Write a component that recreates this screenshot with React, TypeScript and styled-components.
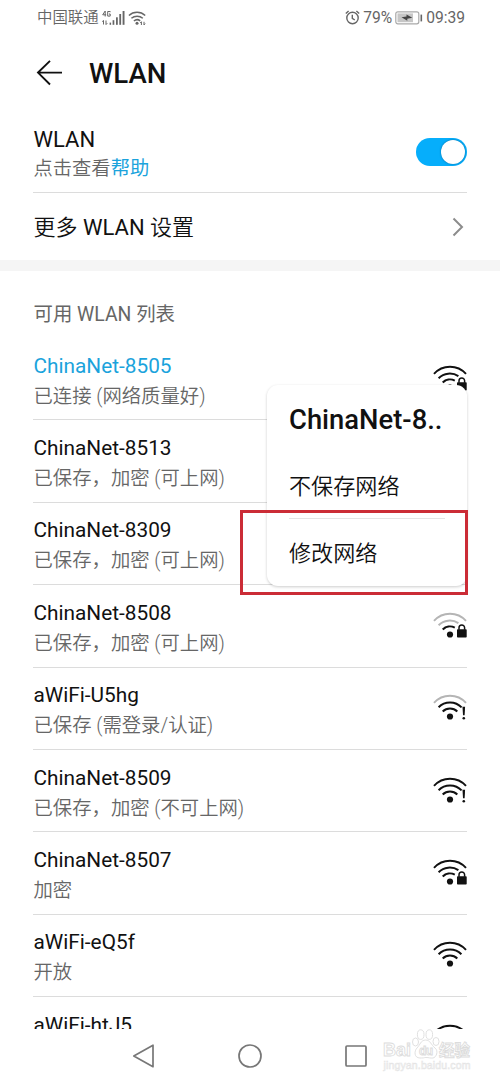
import React from 'react';
import styled, { createGlobalStyle } from 'styled-components';

const GlobalStyle = createGlobalStyle`
  * { box-sizing: border-box; }
  body {
    margin: 0;
    background: #fff;
    font-family: Roboto, "Noto Sans CJK SC", sans-serif;
    color: #111;
  }
`;

const Screen = styled.div`
  position: relative;
  width: 500px;
  height: 1083px;
  display: flex;
  flex-direction: column;
  overflow: hidden;
  background: #fff;
`;

const StatusBar = styled.div`
  height: 34px;
  flex: none;
  padding: 1px 35px 0 37px;
  display: flex;
  align-items: center;
  justify-content: space-between;
  color: #666;
  font-size: 15.3px;
  font-weight: 350;
  line-height: 20px;
`;

const StatusGroup = styled.div`
  display: flex;
  align-items: center;
  gap: 3px;
`;

const Carrier = styled.span`
  font-size: 15.4px;
`;

const Clock = styled.span`
  font-size: 15.6px;
  font-weight: 400;
`;

const Header = styled.header`
  height: 78px;
  flex: none;
  display: flex;
  align-items: center;
  gap: 26px;
  padding-left: 36px;
`;

const PageTitle = styled.h1`
  margin: 0;
  padding-top: 2px;
  font-size: 27.6px;
  font-weight: 500;
  line-height: 36px;
`;

const SettingRow = styled.div<{ $height: number; $line?: boolean }>`
  height: ${p => p.$height}px;
  flex: none;
  margin: 0 33px;
  display: flex;
  align-items: center;
  justify-content: space-between;
  border-bottom: ${p => (p.$line ? '1px solid #dcdcdc' : 'none')};
`;

const TextColumn = styled.div<{ $top: number }>`
  display: flex;
  flex-direction: column;
  padding: ${p => p.$top}px 0 0 0.5px;
`;

const SettingLabel = styled.div`
  font-size: 22px;
  line-height: 30px;
`;

const LightText = styled.span`
  font-weight: 350;
`;

const Hint = styled.div`
  font-size: 19.3px;
  font-weight: 350;
  line-height: 28px;
  color: #666;
`;

const Link = styled.span`
  color: #1ba3dc;
  font-weight: 400;
`;

const Toggle = styled.div`
  width: 51px;
  height: 28px;
  padding: 2px;
  border-radius: 14px;
  background: #06aefb;
  display: flex;
  justify-content: flex-end;
`;

const Knob = styled.div`
  width: 24px;
  height: 24px;
  border-radius: 50%;
  background: #fff;
  box-shadow: 0 0 2px rgba(0, 50, 90, 0.6);
`;

const Band = styled.div`
  height: 11px;
  flex: none;
  background: #f5f5f5;
`;

const SectionTitle = styled.div`
  height: 67px;
  flex: none;
  padding: 30px 0 0 33.5px;
  font-size: 19.4px;
  line-height: 28px;
  color: #666;
`;

const NetworkList = styled.div`
  flex: 1;
  min-height: 0;
  overflow: hidden;
  padding: 0 33px;
`;

const NetworkRow = styled.div`
  height: 82.4px;
  display: flex;
  align-items: center;
  justify-content: space-between;
  border-bottom: 1px solid #dcdcdc;
`;

const NetworkText = styled.div`
  padding: 5px 0 0 0.5px;
`;

const NetworkName = styled.div<{ $active?: boolean }>`
  font-size: 20.8px;
  line-height: 30px;
  color: ${p => (p.$active ? '#1ba3dc' : '#111')};
`;

const NetworkState = styled.div`
  font-size: 19.35px;
  line-height: 31px;
  font-weight: 350;
  color: #666;
`;

const NavBar = styled.nav`
  height: 54px;
  flex: none;
  display: flex;
  justify-content: center;
  align-items: center;
  gap: 80px;
`;

const Menu = styled.div`
  position: absolute;
  left: 267px;
  top: 385px;
  width: 199.5px;
  height: 201px;
  padding: 17px 22px 0;
  border-radius: 11px;
  background: #fff;
  box-shadow: 0 1px 3px rgba(0, 0, 0, 0.2);
`;

const MenuTitle = styled.div`
  font-size: 27.4px;
  font-weight: 500;
  line-height: 36px;
  white-space: nowrap;
`;

const MenuItem = styled.div<{ $line?: boolean }>`
  height: 67px;
  font-size: 22.1px;
  font-weight: 350;
  line-height: 68px;
  white-space: nowrap;
  border-bottom: ${p => (p.$line ? '1px solid #e4e4e4' : 'none')};
`;

const MenuItems = styled.div`
  padding-top: 14px;
`;

const Highlight = styled.div`
  position: absolute;
  left: 240px;
  top: 510px;
  width: 228px;
  height: 85px;
  border: 3px solid #cb2c36;
`;

const Watermark = styled.div`
  position: absolute;
  left: 382px;
  top: 1028px;
  width: 92px;
  height: 46px;
`;

const fade = '#b5b5b5';
const ink = '#111';

type Badge = 'lock' | 'alert' | 'none';

const middleArc: Record<Badge, string> = {
  lock: 'M5.6 13.9A16 16 0 0 1 25.4 11.8',
  alert: 'M5.6 13.9A16 16 0 0 1 28.6 14.1',
  none: 'M5.6 13.9A16 16 0 0 1 28.4 13.9',
};

function WifiIcon({ level, badge }: { level: number; badge: Badge }) {
  const stroke = (n: number) => (level >= n ? ink : fade);
  return (
    <svg width="34" height="28" viewBox="0 0.7 34 28" fill="none" strokeWidth="2">
      <path d="M1 9.6A21.5 21.5 0 0 1 33 9.6" stroke={stroke(3)} />
      <path d={middleArc[badge]} stroke={stroke(2)} />
      <path d={badge === 'lock' ? 'M9.7 18.2A10.4 10.4 0 0 1 21.8 16.3' : 'M9.7 18.2A10.4 10.4 0 0 1 24.3 18.2'} stroke={stroke(1)} />
      <circle cx="17" cy="23.2" r="3.1" fill={ink} />
      {badge === 'lock' && (
        <>
          <rect x="24" y="17.9" width="9.7" height="8.4" rx="0.8" fill={ink} />
          <path d="M26 18.4v-2a2.8 2.8 0 0 1 5.6 0v2" stroke={ink} strokeWidth="1.5" />
        </>
      )}
      {badge === 'alert' && (
        <>
          <path d="M29.5 13.4h2.6l-.5 8.6h-1.6z" fill={ink} />
          <circle cx="30.8" cy="24.9" r="1.3" fill={ink} />
        </>
      )}
    </svg>
  );
}

function SignalIcon() {
  return (
    <svg width="23" height="16" viewBox="0 0 23 16">
      <g stroke="#666" fill="none" strokeWidth="1">
        <path d="M3.2 6.5V1L.7 4.8h3.5" />
        <path d="M8.2 2.2V1.5H5.7v4.6h2.5V4H7" />
        <path d="M1.5 14.5v-4M.3 11.7l1.2-1.4M4 10.5v4M5.3 13.2 4 14.6" />
      </g>
      <g fill="#666">
        <rect x="7.6" y="12.6" width="1.5" height="2.2" />
        <rect x="10.6" y="10.2" width="1.7" height="4.6" />
        <rect x="14" y="7.3" width="1.8" height="7.5" />
        <rect x="17.3" y="4" width="1.8" height="10.8" />
        <rect x="20.6" y="1" width="1.9" height="13.8" />
      </g>
    </svg>
  );
}

function StatusWifi() {
  return (
    <svg width="19" height="16" viewBox="0 0 19 16" fill="none" stroke="#666" strokeWidth="1.5">
      <path d="M.9 5.5A12 12 0 0 1 17.2 5.5" />
      <path d="M3.4 8.3A8.6 8.6 0 0 1 14.8 8.3" />
      <path d="M5.9 11A5 5 0 0 1 12.2 10.8" />
      <circle cx="9" cy="13.3" r="1.5" fill="#666" stroke="none" />
      <path d="M13.4 11.8v3.2M12.2 13l1.2-1.3M16 11.8v3.2M17.2 13.6 16 14.9" strokeWidth="1" />
    </svg>
  );
}

function AlarmIcon() {
  return (
    <svg width="15" height="15" viewBox="0 0 15 15" fill="none" stroke="#666" strokeWidth="1.4">
      <circle cx="7.5" cy="8" r="5.7" />
      <path d="M7.3 4.8V8.3L9.8 10M.8 3.5 3.6 1M14.2 3.5 11.4 1" />
    </svg>
  );
}

function BatteryIcon() {
  return (
    <svg width="28" height="14" viewBox="0 0 28 14">
      <rect x=".8" y=".8" width="23" height="12" rx="2" fill="#fff" stroke="#a9a9a9" strokeWidth="1.2" />
      <rect x="2.5" y="2.4" width="15.5" height="8.8" fill="#c6c6c6" />
      <path d="M6.5 6.3 11.5 5.5V3.6L17.3 6.7 12.3 7.7v2z" fill="#444" />
      <rect x="25.5" y="3.6" width="1.6" height="6.8" fill="#666" />
    </svg>
  );
}

const networks: { name: string; state: string; level: number; badge: Badge; active?: boolean }[] = [
  { name: 'ChinaNet-8505', state: '已连接 (网络质量好)', level: 3, badge: 'lock', active: true },
  { name: 'ChinaNet-8513', state: '已保存，加密 (可上网)', level: 3, badge: 'lock' },
  { name: 'ChinaNet-8309', state: '已保存，加密 (可上网)', level: 3, badge: 'lock' },
  { name: 'ChinaNet-8508', state: '已保存，加密 (可上网)', level: 1, badge: 'lock' },
  { name: 'aWiFi-U5hg', state: '已保存 (需登录/认证)', level: 2, badge: 'alert' },
  { name: 'ChinaNet-8509', state: '已保存，加密 (不可上网)', level: 3, badge: 'alert' },
  { name: 'ChinaNet-8507', state: '加密', level: 3, badge: 'lock' },
  { name: 'aWiFi-eQ5f', state: '开放', level: 3, badge: 'none' },
  { name: 'aWiFi-htJ5', state: '', level: 3, badge: 'none' },
];

export default function App() {
  return (
    <>
      <GlobalStyle />
      <Screen>
        <StatusBar>
          <StatusGroup>
            <Carrier>中国联通</Carrier>
            <SignalIcon />
            <StatusWifi />
          </StatusGroup>
          <StatusGroup>
            <AlarmIcon />
            <Clock>79%</Clock>
            <BatteryIcon />
            <Clock>09:39</Clock>
          </StatusGroup>
        </StatusBar>

        <Header>
          <svg width="27" height="26" viewBox="0 0 27 26" fill="none" stroke="#111" strokeWidth="1.9">
            <path d="M26 12.6H2M14 .9 2 12.6 14 24.5" />
          </svg>
          <PageTitle>WLAN</PageTitle>
        </Header>

        <SettingRow $height={81} $line>
          <TextColumn $top={4}>
            <SettingLabel>WLAN</SettingLabel>
            <Hint>点击查看<Link>帮助</Link></Hint>
          </TextColumn>
          <Toggle><Knob /></Toggle>
        </SettingRow>
        <SettingRow $height={67}>
          <TextColumn $top={2}>
            <SettingLabel><LightText>更多</LightText> WLAN <LightText>设置</LightText></SettingLabel>
          </TextColumn>
          <svg width="16" height="20" viewBox="0 0 16 20" fill="none" stroke="#8c8c8c" strokeWidth="2">
            <path d="M2.5 1.5 11 10 2.5 18.5" />
          </svg>
        </SettingRow>
        <Band />
        <SectionTitle>可用 WLAN 列表</SectionTitle>

        <NetworkList>
          {networks.map(n => (
            <NetworkRow key={n.name}>
              <NetworkText>
                <NetworkName $active={n.active}>{n.name}</NetworkName>
                <NetworkState>{n.state || '\u00a0'}</NetworkState>
              </NetworkText>
              <WifiIcon level={n.level} badge={n.badge} />
            </NetworkRow>
          ))}
        </NetworkList>

        <NavBar>
          <svg width="26" height="26" viewBox="0 0 26 26" fill="none" stroke="#777" strokeWidth="1.7" strokeLinejoin="round">
            <path d="M22 2.2v21.5L2.8 13z" />
          </svg>
          <svg width="26" height="26" viewBox="0 0 26 26" fill="none" stroke="#777" strokeWidth="1.7">
            <circle cx="13" cy="13" r="11" />
          </svg>
          <svg width="26" height="26" viewBox="0 0 26 26" fill="none" stroke="#777" strokeWidth="1.7">
            <rect x="3" y="3" width="20" height="20" rx="1" />
          </svg>
        </NavBar>

        <Menu>
          <MenuTitle>ChinaNet-8..</MenuTitle>
          <MenuItems>
            <MenuItem $line>不保存网络</MenuItem>
            <MenuItem>修改网络</MenuItem>
          </MenuItems>
        </Menu>
        <Highlight />

        <Watermark>
          <svg width="92" height="46" viewBox="0 0 92 46" fill="#fff" stroke="#dcdcdc" strokeWidth="0.9">
            <g fontFamily="Liberation Sans, Noto Sans CJK SC, sans-serif" fontWeight="700">
              <text x="1" y="28" fontSize="19" textLength="28" lengthAdjust="spacingAndGlyphs">Bai</text>
              <ellipse cx="33.5" cy="14" rx="3" ry="4" />
              <ellipse cx="38.7" cy="6.6" rx="3.3" ry="4.8" />
              <ellipse cx="47.3" cy="6.6" rx="3.3" ry="4.8" />
              <ellipse cx="54" cy="13.5" rx="3" ry="4" />
              <path d="M43.5 12c-4.5 0-5.5 5-8.5 8s-3 10 3 10 3-.5 6-.5 4 .8 7 .5 6-7 2-10-4.500-8-9.500-8z" />
              <text x="37" y="27" fontSize="12" textLength="14">du</text>
              <text x="57" y="28" fontSize="15.5">经验</text>
              <text x="1.500" y="41" fontSize="10.500" strokeWidth=".5" stroke="#e4e4e4" fill="#f8f8f8" fontWeight="400" textLength="87">jingyan.baidu.com</text>
            </g>
          </svg>
        </Watermark>
      </Screen>
    </>
  );
}
